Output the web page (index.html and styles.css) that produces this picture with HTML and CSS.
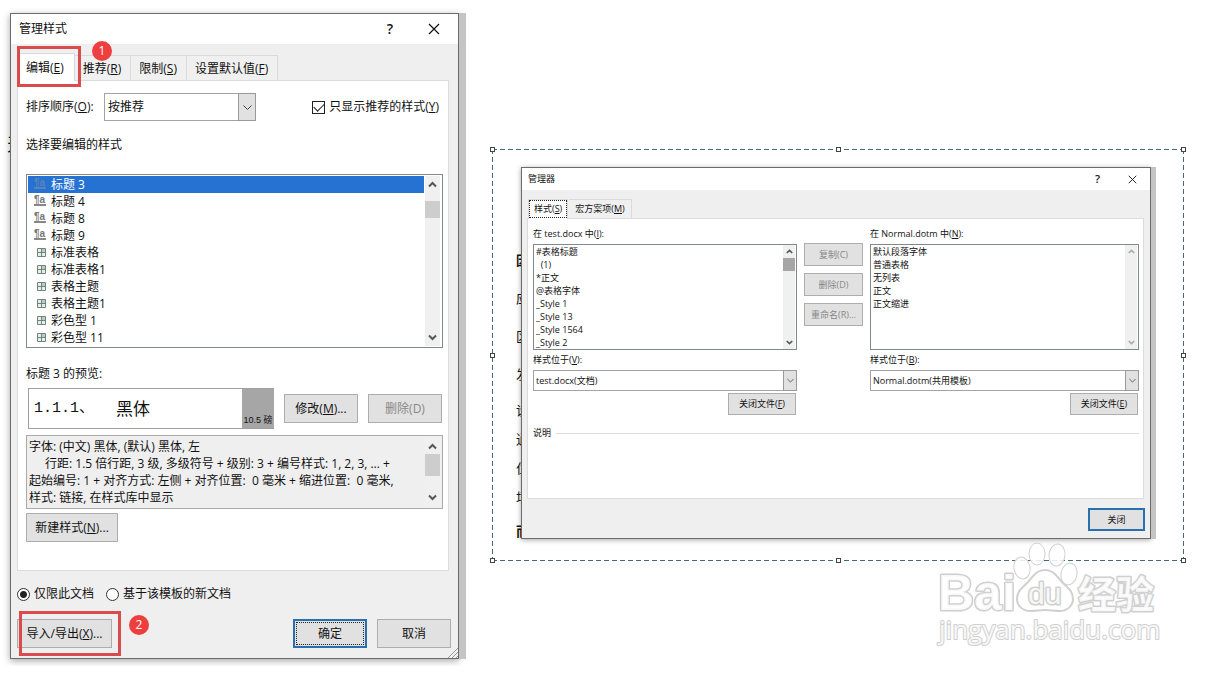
FILE: index.html
```html
<!DOCTYPE html>
<html lang="zh-CN">
<head>
<meta charset="utf-8">
<meta name="viewport" content="width=device-width, initial-scale=1">
<title>管理样式</title>
<link rel="stylesheet" href="styles.css">
</head>
<body>
<svg class="defs" aria-hidden="true">
  <symbol id="up" viewBox="0 0 9 9"><path d="M1 6.5 4.5 3 8 6.5" fill="none" stroke="currentColor" stroke-width="2"/></symbol>
  <symbol id="down" viewBox="0 0 9 9"><path d="M1 2.5 4.5 6 8 2.5" fill="none" stroke="currentColor" stroke-width="2"/></symbol>
  <symbol id="chevron" viewBox="0 0 9 9"><path d="M.5 2.5 4.5 6.5 8.5 2.5" fill="none" stroke="currentColor"/></symbol>
  <symbol id="close" viewBox="0 0 12 12"><path d="M1 1 11 11M11 1 1 11" fill="none" stroke="currentColor" stroke-width="1.2"/></symbol>
  <symbol id="table" viewBox="0 0 9 9"><path d="M.5 .5h8v8h-8zM4.5 .5v8M.5 4.5h8" fill="#e6efea" stroke="#6f857c"/><path d="M5 1h3v3H5z" fill="#b9cdc4"/></symbol>
</svg>
<main class="workspace">
  <p class="fragment" aria-hidden="true">天</p>

  <section class="dialog styles-dialog" aria-labelledby="styles-title">
    <header class="titlebar">
      <h1 id="styles-title">管理样式</h1>
      <button type="button" aria-label="帮助">?</button>
      <button type="button" aria-label="关闭窗口"><svg><use href="#close"/></svg></button>
    </header>
    <div class="body">
      <nav class="tabs">
        <button type="button" class="tab active">编辑(<u>E</u>)</button>
        <button type="button" class="tab">推荐(<u>R</u>)</button>
        <button type="button" class="tab">限制(<u>S</u>)</button>
        <button type="button" class="tab">设置默认值(<u>F</u>)</button>
      </nav>
      <div class="panel">
        <div class="sort-row">
          <label class="sort-label" for="sort">排序顺序(<u>O</u>):</label>
          <div class="combo sort-combo"><select id="sort"><option>按推荐</option></select><span class="drop"><svg><use href="#chevron"/></svg></span></div>
          <label class="check"><input type="checkbox" checked><span>只显示推荐的样式(<u>Y</u>)</span></label>
        </div>
        <p class="list-label">选择要编辑的样式</p>
        <div class="listbox">
          <ul>
            <li class="selected"><i class="para">¶a</i>标题 3</li>
            <li><i class="para">¶a</i>标题 4</li>
            <li><i class="para">¶a</i>标题 8</li>
            <li><i class="para">¶a</i>标题 9</li>
            <li><svg class="grid-icon"><use href="#table"/></svg>标准表格</li>
            <li><svg class="grid-icon"><use href="#table"/></svg>标准表格1</li>
            <li><svg class="grid-icon"><use href="#table"/></svg>表格主题</li>
            <li><svg class="grid-icon"><use href="#table"/></svg>表格主题1</li>
            <li><svg class="grid-icon"><use href="#table"/></svg>彩色型 1</li>
            <li><svg class="grid-icon"><use href="#table"/></svg>彩色型 11</li>
          </ul>
          <div class="scroll"><svg><use href="#up"/></svg><span class="thumb"></span><svg class="end"><use href="#down"/></svg></div>
        </div>
        <p class="preview-label">标题 3 的预览:</p>
        <div class="preview-row">
          <div class="preview"><span class="number">1.1.1、</span><span>黑体</span><small>10.5 磅</small></div>
          <button type="button" class="btn">修改(<u>M</u>)...</button>
          <button type="button" class="btn" disabled>删除(D)</button>
        </div>
        <div class="listbox description">
          <div class="lines">
            <p>字体: (中文) 黑体, (默认) 黑体, 左</p>
            <p class="indent">行距: 1.5 倍行距, 3 级, 多级符号 + 级别: 3 + 编号样式: 1, 2, 3, … +</p>
            <p>起始编号: 1 + 对齐方式: 左侧 + 对齐位置:&nbsp; 0 毫米 + 缩进位置:&nbsp; 0 毫米,</p>
            <p>样式: 链接, 在样式库中显示</p>
          </div>
          <div class="scroll"><svg><use href="#up"/></svg><span class="thumb"></span><svg class="end"><use href="#down"/></svg></div>
        </div>
        <button type="button" class="btn new-style">新建样式(<u>N</u>)...</button>
      </div>
      <div class="radios">
        <label><input type="radio" name="scope" checked>仅限此文档</label>
        <label><input type="radio" name="scope">基于该模板的新文档</label>
      </div>
      <footer class="actions">
        <button type="button" class="btn import">导入/导出(<u>X</u>)...</button>
        <button type="button" class="btn default focused">确定</button>
        <button type="button" class="btn">取消</button>
      </footer>
    </div>
    <svg class="grip" viewBox="0 0 10 10" aria-hidden="true"><path d="M0 10 10 0M4 10 10 4M8 10 10 8" stroke="#999"/></svg>
    <span class="mark mark-tab"></span><b class="badge badge-one">1</b>
    <span class="mark mark-import"></span><b class="badge badge-two">2</b>
  </section>

  <div class="selection">
    <i class="handle nw"></i><i class="handle n"></i><i class="handle ne"></i><i class="handle w"></i>
    <i class="handle e"></i><i class="handle sw"></i><i class="handle s"></i><i class="handle se"></i>
    <div class="behind" aria-hidden="true"><b>因</b><span>应</span><span>区</span><span>发</span><div class="near"><span>设</span><span>通</span><span>位</span><span>场</span></div><b>而</b></div>

    <section class="dialog manager" aria-labelledby="manager-title">
      <header class="titlebar">
        <h2 id="manager-title">管理器</h2>
        <button type="button" aria-label="帮助">?</button>
        <button type="button" aria-label="关闭窗口"><svg><use href="#close"/></svg></button>
      </header>
      <div class="body">
        <nav class="tabs">
          <button type="button" class="tab active"><span>样式(<u>S</u>)</span></button>
          <button type="button" class="tab">宏方案项(<u>M</u>)</button>
        </nav>
        <div class="panel">
          <div class="columns">
            <div class="column">
              <p>在 test.docx 中(<u>I</u>):</p>
              <div class="listbox">
                <ul><li>#表格标题</li><li>&nbsp; (1)</li><li>*正文</li><li>@表格字体</li><li>_Style 1</li><li>_Style 13</li><li>_Style 1564</li><li>_Style 2</li></ul>
                <div class="scroll"><svg><use href="#up"/></svg><span class="thumb dark"></span><svg class="end"><use href="#down"/></svg></div>
              </div>
              <label for="left-file">样式位于(<u>V</u>):</label>
              <div class="combo"><select id="left-file"><option>test.docx(文档)</option></select><span class="drop"><svg><use href="#chevron"/></svg></span></div>
              <button type="button" class="btn file">关闭文件(<u>F</u>)</button>
            </div>
            <div class="transfer">
              <button type="button" class="btn" disabled>复制(C)</button>
              <button type="button" class="btn" disabled>删除(D)</button>
              <button type="button" class="btn" disabled>重命名(R)...</button>
            </div>
            <div class="column">
              <p>在 Normal.dotm 中(<u>N</u>):</p>
              <div class="listbox">
                <ul><li>默认段落字体</li><li>普通表格</li><li>无列表</li><li>正文</li><li>正文缩进</li></ul>
                <div class="scroll idle"><svg><use href="#up"/></svg><svg class="end"><use href="#down"/></svg></div>
              </div>
              <label for="right-file">样式位于(<u>B</u>):</label>
              <div class="combo"><select id="right-file"><option>Normal.dotm(共用模板)</option></select><span class="drop"><svg><use href="#chevron"/></svg></span></div>
              <button type="button" class="btn file">关闭文件(<u>E</u>)</button>
            </div>
          </div>
          <p class="note">说明</p>
        </div>
        <footer class="actions"><button type="button" class="btn default">关闭</button></footer>
      </div>
    </section>

    <svg class="watermark" viewBox="0 0 230 110" role="img" aria-label="Baidu 经验">
      <g class="outline">
        <text class="logo" x="2" y="69">Bai</text>
        <path class="paw" d="M109 29c-9 0-12 7-17 12-6 6-11 9-11 17 0 7 6 12 13 12 6 0 9-1 15-1s9 1 15 1c7 0 13-5 13-12 0-8-5-11-11-17-5-5-8-12-17-12z"/>
        <ellipse cx="86" cy="27" rx="8" ry="11" transform="rotate(-10 86 27)"/>
        <ellipse cx="101" cy="13" rx="8" ry="11"/>
        <ellipse cx="121" cy="14" rx="8" ry="11" transform="rotate(6 121 14)"/>
        <ellipse cx="133" cy="33" rx="8" ry="11" transform="rotate(10 133 33)"/>
        <text class="du" x="92" y="63">du</text>
        <text class="cn" x="142" y="67">经验</text>
        <text class="url" x="3" y="98">jingyan.baidu.com</text>
      </g>
    </svg>
  </div>
</main>
</body>
</html>
```
FILE: styles.css
```css
* { box-sizing: border-box; }
body {
  margin: 0;
  background: #fff;
  color: #111;
  font: 12px/18px "Open Sans", "Noto Sans CJK SC", sans-serif;
}
h1, h2, p, ul { margin: 0; padding: 0; font-size: inherit; font-weight: 400; }
ul { list-style: none; }
button, select, input { font: inherit; color: inherit; margin: 0; }
u { text-underline-offset: 1px; text-decoration-thickness: 1px; }
.defs { position: absolute; width: 0; height: 0; }

.workspace {
  position: relative;
  display: grid;
  grid-template-columns: 449fr 692fr;
  align-items: start;
  gap: 33px;
  padding: 13px 39px 7px 10px;
}
.fragment {
  position: absolute;
  left: 7px;
  top: 130px;
  width: 4px;
  overflow: hidden;
  font-size: 18px;
  line-height: 28px;
}

.dialog {
  position: relative;
  border: 1px solid #6b6b6b;
  background: #efefef;
  box-shadow: 7px 0 0 #c4c4c4, 0 2px 7px rgba(0, 0, 0, .35);
  white-space: nowrap;
}
.titlebar {
  display: flex;
  align-items: center;
  height: 30px;
  padding: 0 2px 0 8px;
  background: #fff;
}
.titlebar h1, .titlebar h2 { flex: 1; }
.titlebar button { width: 44px; border: 0; padding: 0; background: none; font-size: 14px; font-weight: 600; }
.titlebar svg { display: block; width: 12px; height: 12px; margin: auto; }
.body { padding: 9px 7px 10px 6px; }

.tabs { display: flex; align-items: flex-end; height: 27px; padding-left: 1px; }
.tab {
  height: 25px;
  padding: 1px 9px 0 8px;
  border: 1px solid #dadada;
  border-width: 1px 1px 0 0;
  background: #f0f0f0;
}
.tab.active { position: relative; z-index: 1; height: 28px; margin-bottom: -1px; padding: 0 10px 0 8px; background: #fff; }
.panel { margin-right: 2px; padding: 12px 5px 28px 8px; border: 1px solid #dcdcdc; background: #fff; }

.sort-row { display: flex; align-items: center; }
.sort-label { width: 78px; }
.sort-combo { width: 152px; }
.combo { position: relative; height: 28px; }
.combo select {
  width: 100%;
  height: 100%;
  padding: 0 18px 0 3px;
  border: 1px solid #a3a3a3;
  border-radius: 0;
  background: #fff;
  appearance: none;
}
.drop {
  position: absolute;
  inset: 0 0 0 auto;
  display: grid;
  place-items: center;
  width: 18px;
  border: 1px solid #999;
  background: #e1e1e1;
  color: #444;
  pointer-events: none;
}
.drop svg { width: 9px; height: 9px; }
.check { display: flex; align-items: center; gap: 4px; margin: 0 4px 0 auto; }
.check input { appearance: none; display: grid; place-items: center; width: 13px; height: 13px; border: 1px solid #222; background: #fff; }
.check input:checked::after { content: ""; width: 9px; height: 5px; margin-top: -3px; border: solid #222; border-width: 0 0 1px 1px; transform: rotate(-45deg); }
.list-label { margin: 15px 0 20px; }

.listbox { display: flex; border: 1px solid #828790; padding: 1px; background: #fff; }
.listbox ul, .lines { flex: 1; min-width: 0; }
.listbox li { display: flex; align-items: center; height: 17px; }
.para {
  width: 12px;
  height: 11px;
  margin: -3px 5px 0 6px;
  border-bottom: 2px solid #888;
  color: #777;
  font: 700 10px/9px "Liberation Sans", sans-serif;
}
.selected { background: #2672d2; color: #fff; }
.selected .para { color: #5a84b8; border-color: #5a84b8; }
.grid-icon { width: 9px; height: 9px; margin: 0 5px 0 9px; }
.scroll { display: flex; flex-direction: column; align-items: center; width: 15px; margin: 0 1px; padding: 4px 0; background: #f0f0f0; color: #555; }
.scroll svg { width: 9px; height: 9px; }
.scroll .end { margin-top: auto; }
.thumb { width: 100%; height: 17px; margin-top: 12px; background: #cdcdcd; }

.preview-label { margin: 17px 0 5px; }
.preview-row { display: flex; align-items: center; gap: 10px; margin: 0 1px 6px 2px; }
.preview {
  display: flex;
  align-items: center;
  flex: 1;
  height: 41px;
  padding-left: 5px;
  border: 1px solid #a0a0a0;
  border-right: 0;
  font-size: 17px;
}
.number { width: 82px; font-family: "Liberation Mono", "Noto Sans CJK SC", monospace; font-size: 15px; }
.preview small {
  display: flex;
  align-items: flex-end;
  justify-content: center;
  align-self: stretch;
  width: 32px;
  margin-left: auto;
  background: #a6a6a6;
  font: 9px/16px "Liberation Sans", "Noto Sans CJK SC", sans-serif;
}
.btn {
  width: 74px;
  height: 29px;
  padding: 0;
  border: 1px solid #adadad;
  background: #e1e1e1;
  white-space: nowrap;
}
.btn:disabled { color: #888; }
.description { padding: 2px; border-color: #aaa; background: #efefef; }
.description p { height: 17px; line-height: 17px; }
.description .indent { padding-left: 16px; }
.description .scroll { margin: 0; }
.description .thumb { height: 22px; margin-top: 3px; }
.new-style { width: 92px; margin-top: 4px; display: block; }
.radios { display: flex; gap: 12px; margin: 14px 0 16px; }
.radios label { display: flex; align-items: center; gap: 4px; }
.radios input { appearance: none; width: 13px; height: 13px; border: 1px solid #333; border-radius: 50%; background: #fff; }
.radios input:checked { background: radial-gradient(circle, #222 0 3px, #fff 4px); }
.actions { display: flex; gap: 10px; }
.import { width: 95px; margin-right: auto; }
.btn.default { border: 2px solid #2a70ae; }
.focused { outline: 1px dotted #222; outline-offset: -4px; }
.grip { position: absolute; right: 0; bottom: 0; width: 10px; height: 10px; }

.mark { position: absolute; border: 3px solid #da4b4b; pointer-events: none; z-index: 2; }
.mark-tab { left: 6px; top: 32px; width: 64px; height: 41px; }
.mark-import { left: 8px; bottom: 2px; width: 102px; height: 45px; }
.badge {
  position: absolute;
  width: 20px;
  height: 20px;
  border-radius: 50%;
  background: #ee3f3f;
  color: #fff;
  font-weight: 400;
  line-height: 20px;
  text-align: center;
}
.badge-one { left: 81px; top: 27px; }
.badge-two { left: 118px; bottom: 23px; }

.selection {
  position: relative;
  margin-top: 136px;
  padding: 18px 33px 22px 29px;
  background:
    repeating-linear-gradient(90deg, #43697e 0 5px, transparent 5px 8px) 0 0 / 100% 1px no-repeat,
    repeating-linear-gradient(90deg, #43697e 0 5px, transparent 5px 8px) 0 100% / 100% 1px no-repeat,
    repeating-linear-gradient(#43697e 0 5px, transparent 5px 8px) 0 0 / 1px 100% no-repeat,
    repeating-linear-gradient(#43697e 0 5px, transparent 5px 8px) 100% 0 / 1px 100% no-repeat;
}
.handle { position: absolute; width: 5px; height: 5px; border: 1px solid #444; background: #fff; }
.nw, .n, .ne { top: -2px; }
.sw, .s, .se { bottom: -2px; }
.nw, .w, .sw { left: -2px; }
.ne, .e, .se { right: -2px; }
.n, .s { left: calc(50% - 2px); }
.w, .e { top: calc(50% - 2px); }
.behind {
  position: absolute;
  left: 24px;
  top: 92px;
  display: flex;
  flex-direction: column;
  width: 6px;
  overflow: hidden;
  font-size: 13px;
  line-height: 38px;
}
.near { display: flex; flex-direction: column; padding-top: 3px; line-height: 29px; }

.manager { font-size: 9px; line-height: 16px; box-shadow: 5px 0 0 #c4c4c4, 0 1px 5px rgba(0, 0, 0, .35); }
.manager .titlebar { height: 22px; padding: 0 0 0 6px; }
.manager .titlebar button { width: 35px; font-size: 11px; }
.manager .titlebar svg { width: 9px; height: 9px; }
.manager .body { padding: 9px 5px 7px 5px; }
.manager .tabs { height: 19px; }
.manager .tab { height: 19px; padding: 0 6px; }
.manager .tab.active { height: 20px; margin-right: 1px; padding: 0 1px 1px; border-left-width: 1px; }
.manager .active span { display: block; padding: 0 4px; outline: 1px dotted #222; }
.manager .panel { margin-right: 1px; padding: 7px 4px 57px 5px; }
.columns { display: grid; grid-template-columns: 264fr 59px 269fr; gap: 7px; }
.column { display: flex; flex-direction: column; gap: 2px; }
.manager .listbox { height: 106px; padding: 0 1px; }
.manager li { height: 13px; padding-left: 1px; }
.manager .scroll { width: 12px; margin: 0; padding: 3px 0; }
.manager .scroll svg { width: 7px; height: 7px; }
.manager .thumb { height: 13px; margin-top: 3px; }
.manager .dark { background: #a6a6a6; }
.idle { color: #aaa; }
.manager .combo { height: 21px; }
.manager .combo select { padding: 0 14px 0 2px; }
.manager .drop { width: 14px; }
.manager .drop svg { width: 7px; height: 7px; }
.manager .btn { height: 22px; }
.manager .file { align-self: flex-end; width: 68px; margin-right: 1px; }
.transfer { display: flex; flex-direction: column; gap: 7px; padding-top: 17px; }
.manager .transfer .btn { width: 59px; height: 23px; }
.note { display: flex; align-items: center; gap: 5px; margin-top: 10px; }
.note::after { content: ""; flex: 1; height: 1px; background: #dcdcdc; }
.manager .actions { justify-content: flex-end; padding-top: 9px; }
.manager .actions .btn { width: 57px; height: 23px; }

.watermark { position: absolute; right: 18px; bottom: -90px; width: 230px; height: 110px; }
.outline { fill: rgba(255, 255, 255, .85); stroke: #d0d0d0; stroke-width: 1px; }
.outline .paw { stroke-width: 2px; }
.outline text { stroke-width: 3px; stroke-linejoin: round; paint-order: stroke; font-family: "Liberation Sans", sans-serif; font-weight: 700; }
.outline .logo { font-size: 50px; }
.outline .du { font-size: 30px; font-weight: 400; }
.outline .cn { font-family: "Noto Sans CJK SC", sans-serif; font-size: 38px; }
.outline .url { font-family: "Open Sans", sans-serif; font-size: 26px; font-weight: 400; stroke-width: 2px; }
```
